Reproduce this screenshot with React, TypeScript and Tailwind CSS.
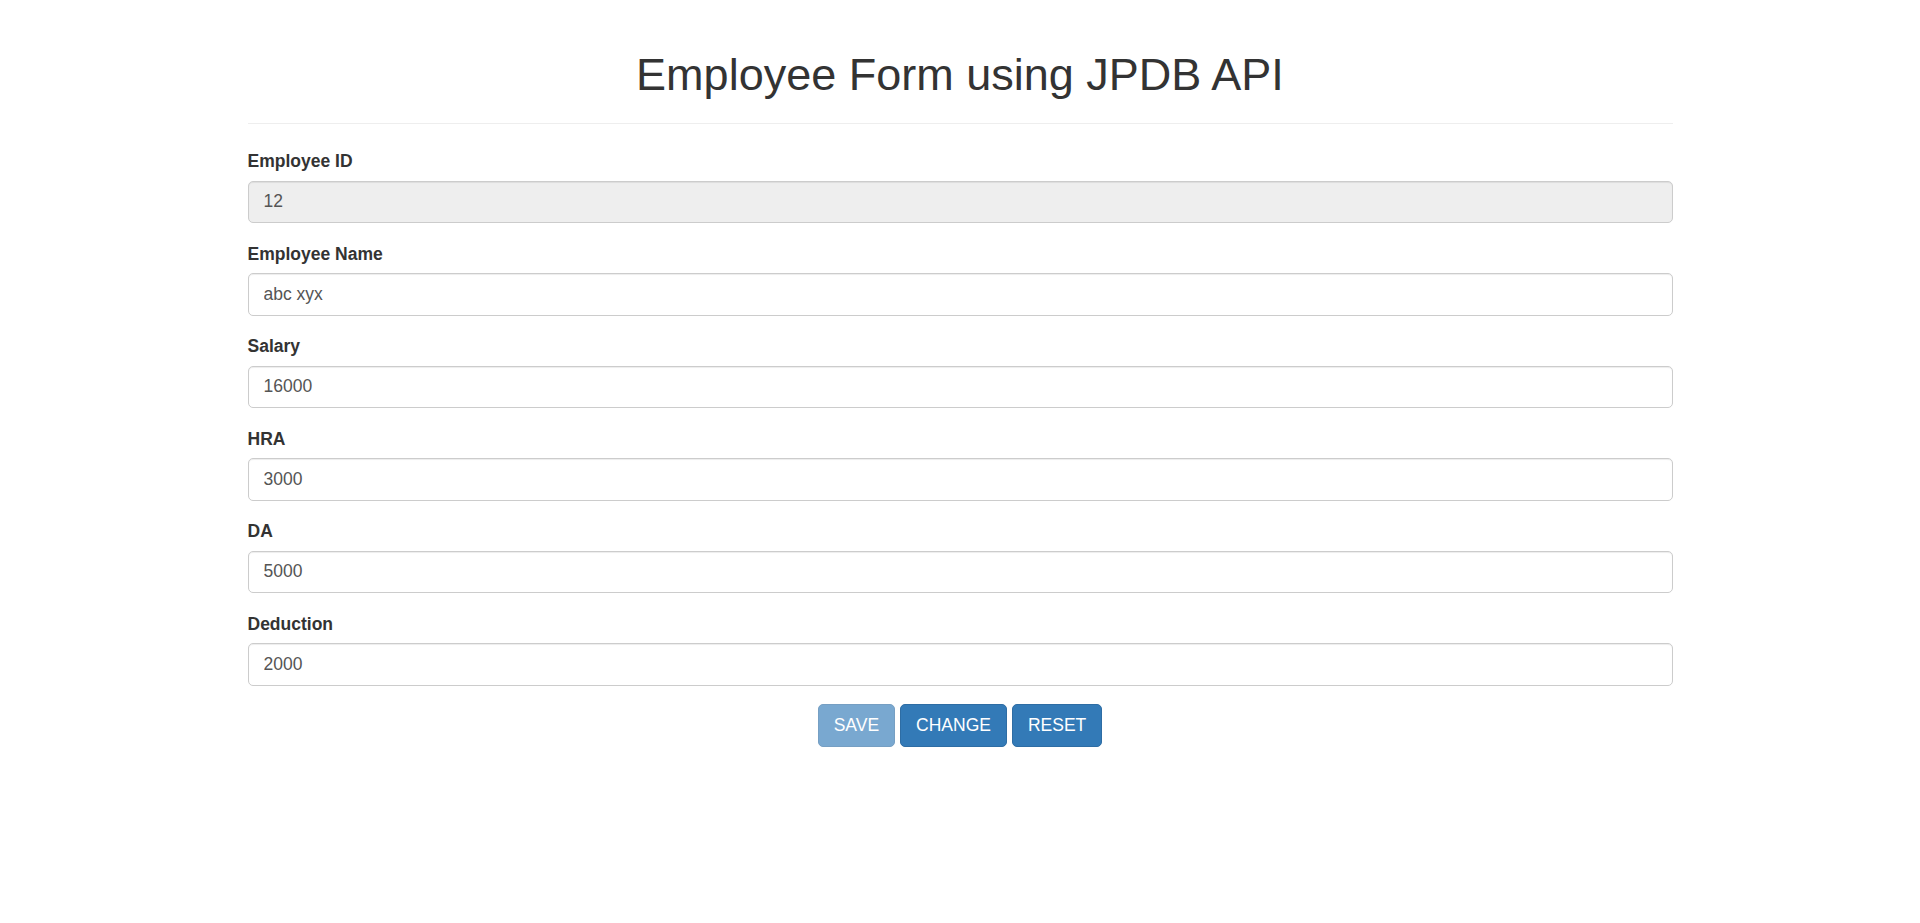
import React, { useState } from 'react';

const fields = [
  { id: 'empId', label: 'Employee ID', value: '12', disabled: true },
  { id: 'empName', label: 'Employee Name', value: 'abc xyx', disabled: false },
  { id: 'salary', label: 'Salary', value: '16000', disabled: false },
  { id: 'hra', label: 'HRA', value: '3000', disabled: false },
  { id: 'da', label: 'DA', value: '5000', disabled: false },
  { id: 'deduction', label: 'Deduction', value: '2000', disabled: false },
];

export default function App() {
  const [values, setValues] = useState<Record<string, string>>(
    Object.fromEntries(fields.map((f) => [f.id, f.value]))
  );

  return (
    <div className="h-[923px] overflow-hidden pt-[50px] bg-white text-[#333] font-['Liberation_Sans',Arial,sans-serif]">
      <div className="w-[1425px] mx-auto">
        {/* Header */}
        <div className="pb-[11.25px] mb-[25px] border-b border-[#eee]">
          <h1 className="text-center text-[45px] leading-[49.5px] font-normal mb-[12.5px]">
            Employee Form using JPDB API
          </h1>
        </div>

        <form onSubmit={(e) => e.preventDefault()}>
          {fields.map((f) => (
            <div key={f.id} className="mb-[18.75px]">
              <label
                htmlFor={f.id}
                className="block font-bold text-[17.5px] leading-[25px] mb-[6.25px]"
              >
                {f.label}
              </label>
              <input
                id={f.id}
                type="text"
                disabled={f.disabled}
                value={values[f.id]}
                onChange={(e) => setValues({ ...values, [f.id]: e.target.value })}
                className={`block w-full h-[42.5px] px-[15px] py-[7.5px] text-[17.5px] leading-[25px] text-[#555] border border-[#ccc] rounded-[5px] shadow-[inset_0_1px_1px_rgba(0,0,0,0.075)] outline-none ${
                  f.disabled ? 'bg-[#eee]' : 'bg-white'
                }`}
              />
            </div>
          ))}

          <div className="flex justify-center gap-[5px]">
            <button
              type="button"
              disabled
              className="h-[42.5px] px-[15px] text-[17.5px] leading-[25px] text-white bg-[#337ab7] border border-[#2e6da4] rounded-[5px] opacity-65"
            >
              SAVE
            </button>
            <button
              type="button"
              className="h-[42.5px] px-[15px] text-[17.5px] leading-[25px] text-white bg-[#337ab7] border border-[#2e6da4] rounded-[5px]"
            >
              CHANGE
            </button>
            <button
              type="button"
              className="h-[42.5px] px-[15px] text-[17.5px] leading-[25px] text-white bg-[#337ab7] border border-[#2e6da4] rounded-[5px]"
            >
              RESET
            </button>
          </div>
        </form>
      </div>
    </div>
  );
}
